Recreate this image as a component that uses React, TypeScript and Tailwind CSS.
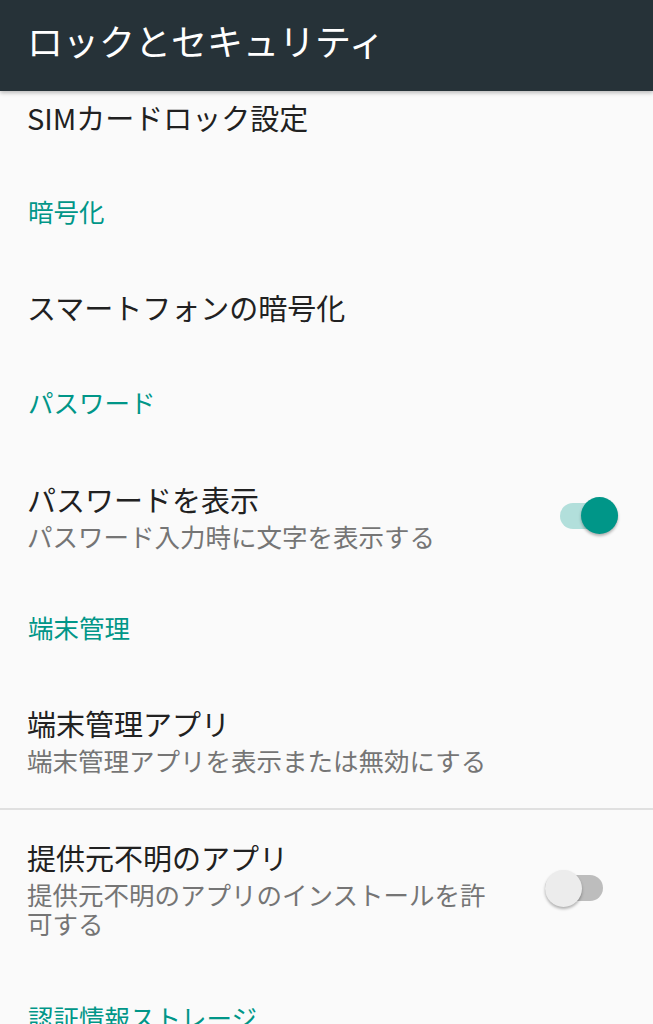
import React from 'react';

const font = { fontFamily: '"Noto Sans CJK JP", "Noto Sans", sans-serif' };

function Toggle({ on, className = '' }: { on: boolean; className?: string }) {
  return (
    <div className={`relative h-[37px] w-[58px] flex items-center shrink-0 ${className}`}>
      <div className={`h-[26px] w-[58px] rounded-full ${on ? 'bg-[#b2dfdb]' : 'bg-[#bdbdbd]'}`} />
      <div
        className={`absolute top-0 h-[37px] w-[37px] rounded-full shadow-[0_2px_3px_rgba(0,0,0,0.3)] ${
          on ? 'right-0 bg-[#009688]' : 'left-0 bg-[#ececec]'
        }`}
      />
    </div>
  );
}

function Category({ label, h }: { label: string; h: string }) {
  return (
    <div className={`${h} flex items-center pl-[28px] text-[25.5px] leading-none text-[#009688]`}>{label}</div>
  );
}

export default function App() {
  return (
    <div className="w-[653px] h-[1024px] overflow-hidden bg-[#fafafa]" style={font}>
      <header className="relative z-10 h-[91px] bg-[#263238] flex items-center pl-[27px] pb-[12px] shadow-[0_2px_4px_rgba(0,0,0,0.25)]">
        <h1 className="text-[36px] leading-none text-white font-normal">ロックとセキュリティ</h1>
      </header>

      <div className="h-[52px] flex items-center pl-[27px] text-[29px] leading-none text-[#212121]">
        SIMカードロック設定
      </div>

      <Category label="暗号化" h="h-[135px]" />

      <div className="h-[59px] flex items-center pl-[27px] text-[29px] leading-none text-[#212121]">
        スマートフォンの暗号化
      </div>

      <Category label="パスワード" h="h-[130px]" />

      <div className="flex items-center pt-[14px] pb-[14px] pl-[27px] pr-[35px]">
        <div className="flex-1">
          <div className="text-[29px] leading-[36px] text-[#212121]">パスワードを表示</div>
          <div className="mt-[4px] text-[25.5px] leading-[29px] text-[#757575]">パスワード入力時に文字を表示する</div>
        </div>
        <Toggle on />
      </div>

      <Category label="端末管理" h="h-[126px]" />

      <div className="pt-[15px] pb-[15px] pl-[27px] pr-[20px]">
        <div className="text-[29px] leading-[36px] text-[#212121]">端末管理アプリ</div>
        <div className="mt-[4px] text-[25.5px] leading-[29px] text-[#757575]">端末管理アプリを表示または無効にする</div>
      </div>

      <div className="h-[19px]" />
      <div className="h-[2px] bg-[#e0e0e0]" />

      <div className="flex items-center pt-[29px] pl-[27px] pr-[50px]">
        <div className="flex-1">
          <div className="text-[29px] leading-[36px] text-[#212121]">提供元不明のアプリ</div>
          <div className="mt-[4px] w-[470px] text-[25.5px] leading-[29px] text-[#757575]">
            提供元不明のアプリのインストールを許可する
          </div>
        </div>
        <Toggle on={false} />
      </div>

      <div className="pt-[67px] pl-[28px] text-[25.5px] leading-[25px] text-[#009688]">認証情報ストレージ</div>
    </div>
  );
}
